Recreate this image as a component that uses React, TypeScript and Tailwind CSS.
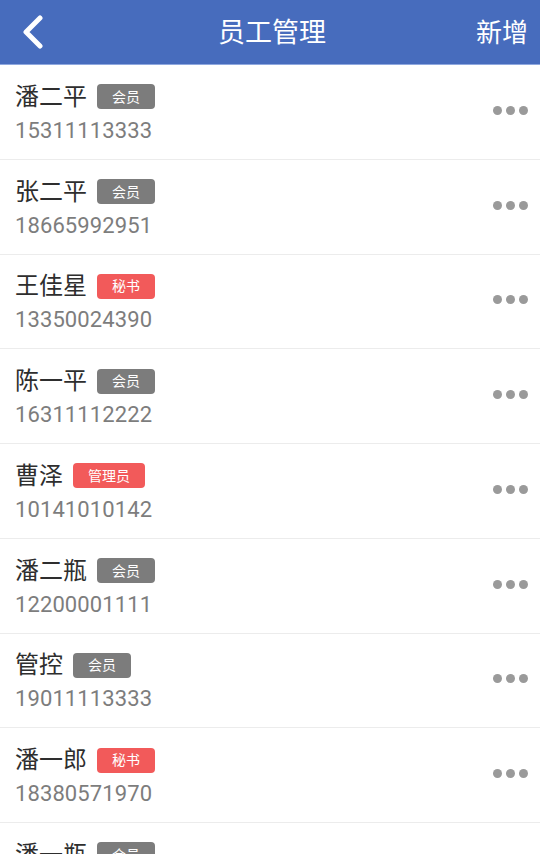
import React from "react";

type Staff = {
  name: string;
  role: string;
  phone: string;
};

const staff: Staff[] = [
  { name: "潘二平", role: "会员", phone: "15311113333" },
  { name: "张二平", role: "会员", phone: "18665992951" },
  { name: "王佳星", role: "秘书", phone: "13350024390" },
  { name: "陈一平", role: "会员", phone: "16311112222" },
  { name: "曹泽", role: "管理员", phone: "10141010142" },
  { name: "潘二瓶", role: "会员", phone: "12200001111" },
  { name: "管控", role: "会员", phone: "19011113333" },
  { name: "潘一郎", role: "秘书", phone: "18380571970" },
  { name: "潘一瓶", role: "会员", phone: "18380571971" },
];

const RoleBadge = ({ role }: { role: string }) => {
  const gray = role === "会员";
  return (
    <span
      className={`ml-[10px] inline-flex h-[25px] items-center rounded-[4px] px-[15px] text-[14px] leading-none text-white ${
        gray ? "bg-[#7c7c7c]" : "bg-[#f25a5a]"
      }`}
    >
      {role}
    </span>
  );
};

const StaffRow = ({ item }: { item: Staff }) => {
  return (
    <div className="flex h-[94.75px] shrink-0 items-center justify-between border-b border-[#ececec] bg-white pl-[15px] pr-[12px]">
      <div className="flex flex-col gap-[6px] pt-[2px]">
        <div className="flex h-[30px] items-center">
          <span className="text-[24px] leading-[30px] text-[#2e2e2e]">
            {item.name}
          </span>
          <RoleBadge role={item.role} />
        </div>
        <span className="font-['Roboto',sans-serif] text-[22px] leading-[26px] tracking-[0.1px] text-[#7d7d7d]">
          {item.phone}
        </span>
      </div>
      <div className="-mt-[3px] flex gap-[4px]">
        <span className="h-[9px] w-[9px] rounded-full bg-[#9a9a9a]" />
        <span className="h-[9px] w-[9px] rounded-full bg-[#9a9a9a]" />
        <span className="h-[9px] w-[9px] rounded-full bg-[#9a9a9a]" />
      </div>
    </div>
  );
};

const App = () => {
  return (
    <div className="flex h-[854px] w-[540px] flex-col overflow-hidden bg-white font-['Roboto','Noto_Sans_CJK_SC',sans-serif]">
      <div className="relative flex h-[65px] shrink-0 items-center justify-center border-b border-[#8fa8df] bg-[#476cbd] text-white">
        <button className="absolute left-[20px] top-[15px] flex h-[34px] w-[26px] items-center justify-center">
          <svg width="24" height="34" viewBox="0 0 24 34" fill="none">
            <path
              d="M19 3 L5 17 L19 31"
              stroke="white"
              strokeWidth="5"
              strokeLinecap="round"
              strokeLinejoin="round"
            />
          </svg>
        </button>
        <h1 className="pl-[4px] pt-[3px] text-[27px] leading-none">员工管理</h1>
        <span className="absolute right-[12px] top-[18px] text-[26px] leading-[30px]">
          新增
        </span>
      </div>
      <div className="flex flex-col">
        {staff.map((item) => (
          <StaffRow key={item.phone} item={item} />
        ))}
      </div>
    </div>
  );
};

export default App;
